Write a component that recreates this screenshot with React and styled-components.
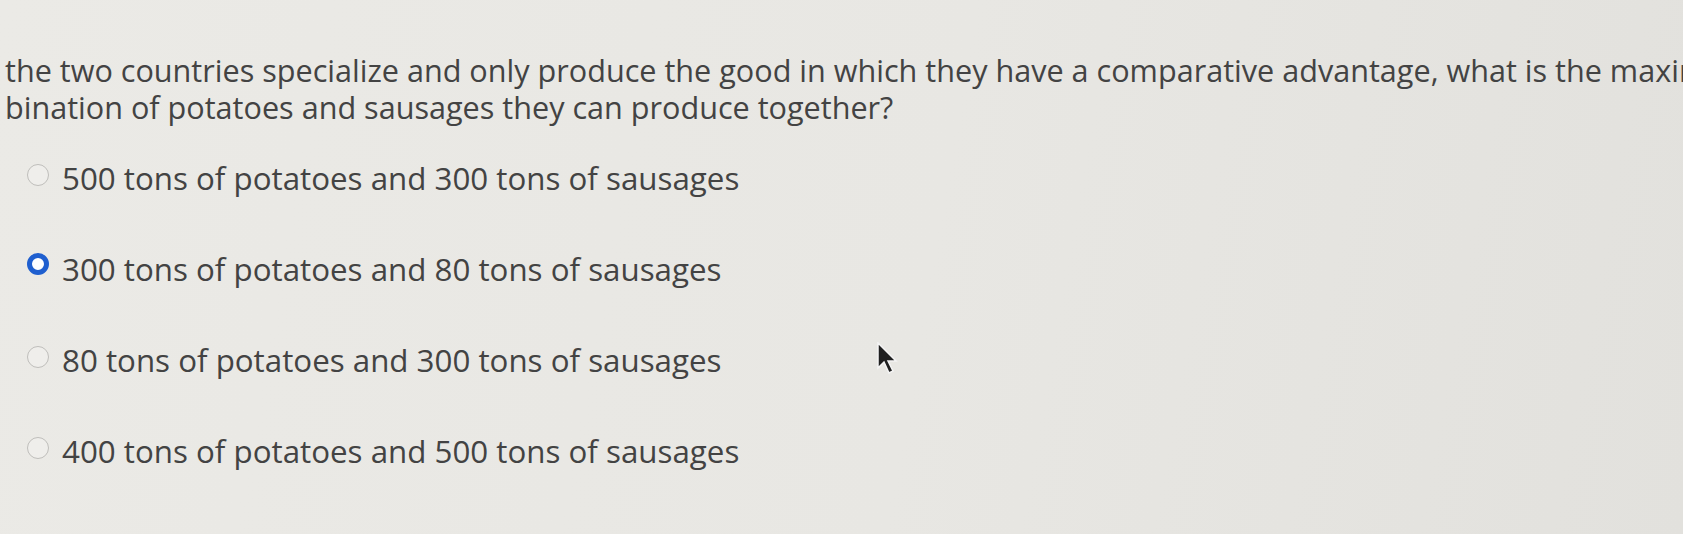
import React from 'react'
import styled, { createGlobalStyle } from 'styled-components'

const GlobalStyle = createGlobalStyle`
  html, body {
    margin: 0;
    padding: 0;
    overflow: hidden;
  }
  body {
    background: linear-gradient(100deg, #ebeae6 0%, #e8e7e3 55%, #e2e1dd 100%);
    font-family: "Open Sans", Lato, sans-serif;
    color: #434343;
  }
`

const Page = styled.div`
  position: relative;
  width: 1683px;
  height: 534px;
  overflow: hidden;
`

const Question = styled.div`
  padding: 52px 0 0 5px;
  font-size: 30.6px;
  line-height: 37px;
  white-space: nowrap;
`

const Options = styled.div`
  display: flex;
  flex-direction: column;
  padding: 6px 0 0 27px;
`

const Option = styled.label`
  display: flex;
  align-items: center;
  gap: 13px;
  height: 91px;
  font-size: 31.3px;
`

const Radio = styled.span`
  box-sizing: border-box;
  width: 22px;
  height: 22px;
  border-radius: 50%;
  flex-shrink: 0;
  margin-top: ${p => (p.checked ? '-10px' : '-6px')};
  background: ${p => (p.checked ? '#ffffff' : '#efeeeb')};
  border: ${p => (p.checked ? '5px solid #1f5fcf' : '1.5px solid #bfbebb')};
`

const Cursor = styled.svg`
  position: absolute;
  left: 876px;
  top: 342px;
`

const answers = [
  '500 tons of potatoes and 300 tons of sausages',
  '300 tons of potatoes and 80 tons of sausages',
  '80 tons of potatoes and 300 tons of sausages',
  '400 tons of potatoes and 500 tons of sausages',
]

export default function App() {
  return (
    <Page>
      <GlobalStyle />
      <Question>
        <div>the two countries specialize and only produce the good in which they have a comparative advantage, what is the maximum com-</div>
        <div>bination of potatoes and sausages they can produce together?</div>
      </Question>
      <Options>
        {answers.map((a, i) => (
          <Option key={a}>
            <Radio checked={i === 1} />
            {a}
          </Option>
        ))}
      </Options>
      <Cursor width="22" height="34" viewBox="0 0 22 34">
        <path d="M2 1 L2 26 L8 20 L13 31 L17 29 L12 19 L20 19 Z" fill="#1f1f1f" stroke="#f4f4f4" strokeWidth="1.5" />
      </Cursor>
    </Page>
  )
}
